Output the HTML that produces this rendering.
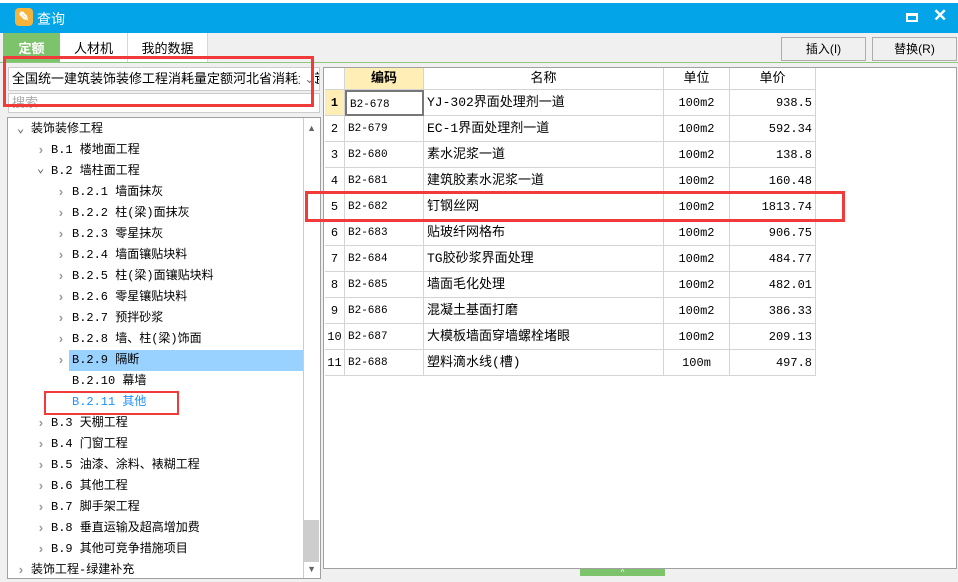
<!DOCTYPE html>
<html><head><meta charset="utf-8"><style>
*{margin:0;padding:0;box-sizing:border-box}
body{width:958px;height:582px;overflow:hidden;background:#f0f0f0;font-family:"Liberation Sans","Noto Sans CJK SC",sans-serif;font-size:12px;color:#000;position:relative}
.a{position:absolute}
.m{font-family:"Liberation Mono","Noto Sans CJK SC",monospace;font-size:12px}
.tr{position:absolute;height:21px;line-height:21px;white-space:nowrap}
.ar{position:absolute;color:#999;font-size:13px;font-weight:bold}
.cell{position:absolute;height:26px;line-height:26px;border-right:1px solid #d4d4d4;border-bottom:1px solid #d4d4d4;padding:0 3px;white-space:nowrap;overflow:hidden}
</style></head><body>
<div class="a" style="left:0;top:0;width:958px;height:3px;background:#fff"></div>
<div class="a" style="left:0;top:3px;width:958px;height:30px;background:#03a5e8"></div>
<div class="a" style="left:15px;top:8px;width:18px;height:18px;background:#f6b33c;border-radius:4px;color:#fff;font-size:13px;line-height:18px;text-align:center;font-weight:bold">✎</div>
<div class="a" style="left:37px;top:9px;color:#fff;font-size:14px">查询</div>
<div class="a" style="left:906px;top:13px;width:12px;height:9px;border:2px solid #fff;border-top-width:3px"></div>
<div class="a" style="left:933px;top:6px;color:#fff;font-size:17px;font-weight:bold">✕</div>
<div class="a" style="left:3px;top:33px;width:57px;height:29px;background:#7cc36b;color:#fff;font-weight:bold;font-size:13px;text-align:center;line-height:32px">定额</div>
<div class="a" style="left:60px;top:33px;width:68px;height:29px;background:#fff;border-right:1px solid #c8e2c0;text-align:center;line-height:32px;font-size:13px">人材机</div>
<div class="a" style="left:128px;top:33px;width:80px;height:29px;background:#fff;border-right:1px solid #c8e2c0;text-align:center;line-height:32px;font-size:13px">我的数据</div>
<div class="a" style="left:0;top:62px;width:958px;height:1px;background:#8cc87d"></div>
<div class="a" style="left:781px;top:37px;width:85px;height:24px;border:1px solid #adadad;background:#f0f0f0;text-align:center;line-height:22px" >插入(I)</div>
<div class="a" style="left:872px;top:37px;width:85px;height:24px;border:1px solid #adadad;background:#f0f0f0;text-align:center;line-height:22px">替换(R)</div>
<!-- left -->
<div class="a" style="left:8px;top:67px;width:312px;height:24px;background:#fff;border:1px solid #ccc;line-height:22px;padding-left:3px;font-size:13px;overflow:hidden;white-space:nowrap">全国统一建筑装饰装修工程消耗量定额河北省消耗量定<span style="color:#777;position:absolute;right:4px;background:#fff;padding-left:4px">⌄</span></div>
<div class="a" style="left:8px;top:93px;width:312px;height:20px;background:#fff;border:1px solid #ccc;color:#aaa;line-height:18px;padding-left:3px;font-size:13px">搜索</div>
<div class="a" style="left:3px;top:56px;width:311px;height:51px;border:3px solid #f13a3a"></div>
<div class="a" style="left:7px;top:117px;width:314px;height:462px;background:#fff;border:1px solid #a0a0a0;overflow:hidden">
<div class="a" style="right:0;top:0;width:17px;height:460px;background:#fff;border-left:1px solid #ccc"></div>
<div class="a" style="right:1px;top:402px;width:15px;height:42px;background:#cdcdcd"></div>
<div class="a" style="right:4px;top:5px;color:#666;font-size:9px">▲</div>
<div class="a" style="right:4px;top:446px;color:#666;font-size:9px">▼</div>
</div>
<div class="a" style="left:69px;top:350px;width:234px;height:21px;background:#99d1ff"></div>
<div class="a m" style="left:0;top:0;width:320px;height:582px">
<div class="tr" style="top:119px;left:17px"><span style="color:#555">⌄</span></div><div class="tr" style="top:119px;left:31px">装饰装修工程</div>
<div class="ar" style="top:143px;left:37px">›</div><div class="tr" style="top:140px;left:51px">B.1 楼地面工程</div>
<div class="tr" style="top:159px;left:37px;color:#555">⌄</div><div class="tr" style="top:161px;left:51px">B.2 墙柱面工程</div>
<div class="ar" style="top:185px;left:57px">›</div><div class="tr" style="top:182px;left:72px">B.2.1 墙面抹灰</div>
<div class="ar" style="top:206px;left:57px">›</div><div class="tr" style="top:203px;left:72px">B.2.2 柱(梁)面抹灰</div>
<div class="ar" style="top:227px;left:57px">›</div><div class="tr" style="top:224px;left:72px">B.2.3 零星抹灰</div>
<div class="ar" style="top:248px;left:57px">›</div><div class="tr" style="top:245px;left:72px">B.2.4 墙面镶贴块料</div>
<div class="ar" style="top:269px;left:57px">›</div><div class="tr" style="top:266px;left:72px">B.2.5 柱(梁)面镶贴块料</div>
<div class="ar" style="top:290px;left:57px">›</div><div class="tr" style="top:287px;left:72px">B.2.6 零星镶贴块料</div>
<div class="ar" style="top:311px;left:57px">›</div><div class="tr" style="top:308px;left:72px">B.2.7 预拌砂浆</div>
<div class="ar" style="top:332px;left:57px">›</div><div class="tr" style="top:329px;left:72px">B.2.8 墙、柱(梁)饰面</div>
<div class="ar" style="top:353px;left:57px">›</div><div class="tr" style="top:350px;left:72px">B.2.9 隔断</div>
<div class="tr" style="top:371px;left:72px">B.2.10 幕墙</div>
<div class="tr" style="top:392px;left:72px;color:#1e90ff">B.2.11 其他</div>
<div class="ar" style="top:416px;left:37px">›</div><div class="tr" style="top:413px;left:51px">B.3 天棚工程</div>
<div class="ar" style="top:437px;left:37px">›</div><div class="tr" style="top:434px;left:51px">B.4 门窗工程</div>
<div class="ar" style="top:458px;left:37px">›</div><div class="tr" style="top:455px;left:51px">B.5 油漆、涂料、裱糊工程</div>
<div class="ar" style="top:479px;left:37px">›</div><div class="tr" style="top:476px;left:51px">B.6 其他工程</div>
<div class="ar" style="top:500px;left:37px">›</div><div class="tr" style="top:497px;left:51px">B.7 脚手架工程</div>
<div class="ar" style="top:521px;left:37px">›</div><div class="tr" style="top:518px;left:51px">B.8 垂直运输及超高增加费</div>
<div class="ar" style="top:542px;left:37px">›</div><div class="tr" style="top:539px;left:51px">B.9 其他可竞争措施项目</div>
<div class="ar" style="top:563px;left:17px">›</div><div class="tr" style="top:560px;left:31px;height:17px;overflow:hidden">装饰工程-绿建补充</div>
</div>
<div class="a" style="left:44px;top:391px;width:135px;height:24px;border:2px solid #f13a3a"></div>
<!-- right -->
<div class="a" style="left:323px;top:67px;width:634px;height:502px;background:#fff;border:1px solid #a0a0a0"></div>
<div class="a" style="left:580px;top:569px;width:85px;height:7px;background:#7cc36b;color:#fff;font-size:8px;text-align:center;line-height:7px">^</div>
<div class="a m" id="g" style="left:325px;top:68px">
<div class="cell" style="left:0;top:0;width:20px;height:22px;background:#fff"></div>
<div class="cell" style="left:20px;top:0;width:79px;height:22px;line-height:22px;background:#ffeeb5;font-weight:bold;text-align:center;font-size:13px">编码</div>
<div class="cell" style="left:99px;top:0;width:240px;height:22px;line-height:22px;text-align:center;font-size:13px">名称</div>
<div class="cell" style="left:339px;top:0;width:66px;height:22px;line-height:22px;text-align:center;font-size:13px">单位</div>
<div class="cell" style="left:405px;top:0;width:86px;height:22px;line-height:22px;text-align:center;font-size:13px">单价</div>
</div>
<div class="a m" style="left:325px;top:90px;font-size:12px">
<div class="cell" style="left:0;top:0;width:20px;background:#ffeeb5;font-weight:bold;text-align:center;padding:0">1</div>
<div class="cell" style="left:20px;top:0;width:79px;border:2px solid #777;font-size:11px">B2-678</div>
<div class="cell" style="left:99px;top:0;width:240px;font-size:13px">YJ-302界面处理剂一道</div>
<div class="cell" style="left:339px;top:0;width:66px;text-align:center">100m2</div>
<div class="cell" style="left:405px;top:0;width:86px;text-align:right">938.5</div>
</div>
<div id="rows"></div>
<script>
var d=[["2","B2-679","EC-1界面处理剂一道","100m2","592.34"],["3","B2-680","素水泥浆一道","100m2","138.8"],["4","B2-681","建筑胶素水泥浆一道","100m2","160.48"],["5","B2-682","钉钢丝网","100m2","1813.74"],["6","B2-683","贴玻纤网格布","100m2","906.75"],["7","B2-684","TG胶砂浆界面处理","100m2","484.77"],["8","B2-685","墙面毛化处理","100m2","482.01"],["9","B2-686","混凝土基面打磨","100m2","386.33"],["10","B2-687","大模板墙面穿墙螺栓堵眼","100m2","209.13"],["11","B2-688","塑料滴水线(槽)","100m","497.8"]];
var h="";d.forEach(function(r,i){var t=116+26*i;
h+='<div class="a m" style="left:325px;top:'+t+'px">'+
'<div class="cell" style="left:0;top:0;width:20px;text-align:center;padding:0">'+r[0]+'</div>'+
'<div class="cell" style="left:20px;top:0;width:79px;font-size:11px">'+r[1]+'</div>'+
'<div class="cell" style="left:99px;top:0;width:240px;font-size:13px">'+r[2]+'</div>'+
'<div class="cell" style="left:339px;top:0;width:66px;text-align:center">'+r[3]+'</div>'+
'<div class="cell" style="left:405px;top:0;width:86px;text-align:right">'+r[4]+'</div></div>';});
document.getElementById("rows").innerHTML=h;
</script>
<div class="a" style="left:305px;top:191px;width:540px;height:31px;border:3px solid #f13a3a"></div>
</body></html>
